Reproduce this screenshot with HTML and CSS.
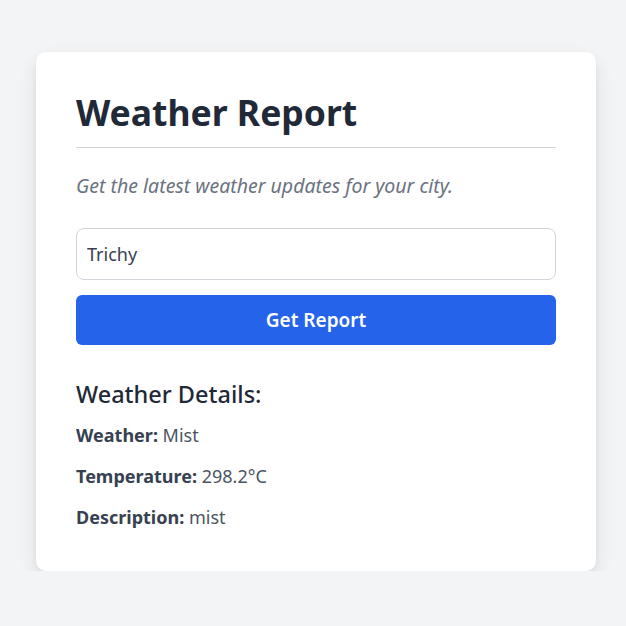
FILE: index.html
```html
<!DOCTYPE html>
<html>
<head>
<meta charset="utf-8">
<link rel="stylesheet" href="styles.css">
</head>
<body>
<div class="card">
  <h1 class="title">Weather Report</h1>
  <p class="subtitle">Get the latest weather updates for your city.</p>
  <input class="city" type="text" value="Trichy">
  <button class="btn">Get Report</button>
  <div class="details">
    <h2 class="details-title">Weather Details:</h2>
    <p class="row"><strong>Weather:</strong> Mist</p>
    <p class="row"><strong>Temperature:</strong> 298.2°C</p>
    <p class="row"><strong>Description:</strong> mist</p>
  </div>
</div>
</body>
</html>
```
FILE: styles.css
```css
* { box-sizing: border-box; }
html, body { margin: 0; padding: 0; }
body {
  background: #f3f4f6;
  font-family: "Noto Sans", "Open Sans", sans-serif;
  color: #1f2937;
  padding: 52px 0 0 6px;
}
.card {
  width: 560px;
  margin: 0 auto;
  background: #fff;
  border-radius: 10px;
  padding: 40px 40px 39px;
  box-shadow: 0 8px 20px -2px rgba(0,0,0,0.12), 0 3px 8px -3px rgba(0,0,0,0.08);
}
.title {
  margin: 0;
  font-size: 35.5px;
  line-height: 40px;
  font-weight: 700;
  color: #1f2937;
  padding-bottom: 15px;
  border-bottom: 1px solid #d1d5db;
}
.subtitle {
  margin: 24px 0 0;
  font-size: 19.5px;
  line-height: 28px;
  font-style: italic;
  color: #6b7280;
}
.city {
  display: block;
  width: 100%;
  margin-top: 28px;
  height: 52px;
  padding: 0 10px;
  border: 1px solid #d1d5db;
  border-radius: 8px;
  font-family: inherit;
  font-size: 18px;
  color: #374151;
  background: #fff;
}
.btn {
  display: block;
  width: 100%;
  margin-top: 15px;
  height: 50px;
  border: none;
  border-radius: 6px;
  background: #2563eb;
  color: #fff;
  font-family: inherit;
  font-size: 19px;
  font-weight: 600;
}
.details { margin-top: 34px; }
.details-title {
  margin: 0;
  font-size: 23.5px;
  line-height: 30px;
  font-weight: 500;
  color: #1f2937;
}
.row {
  margin: 12px 0 0;
  font-size: 18px;
  line-height: 29px;
  color: #4b5563;
}
.row strong { font-weight: 700; color: #374151; }
```
